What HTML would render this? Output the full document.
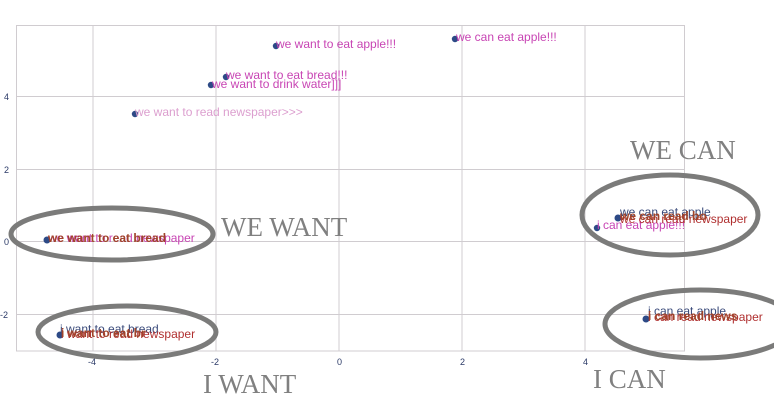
<!DOCTYPE html>
<html><head><meta charset="utf-8"><style>
html,body{margin:0;padding:0;background:#fff;}
svg{display:block;font-family:"Liberation Sans",Arial,sans-serif;}
.tk{font-size:9px;fill:#2b3a67;}
.lb{font-size:12px;}
.big{font-family:"Liberation Serif",serif;font-size:27px;fill:#808080;}
</style></head><body>
<svg width="774" height="400" viewBox="0 0 774 400">
<g stroke="#d0ccd0" stroke-width="1" fill="none">
<rect x="16.5" y="25.5" width="668" height="325.5"/>
<line x1="93" y1="25" x2="93" y2="351"/>
<line x1="216" y1="25" x2="216" y2="351"/>
<line x1="339" y1="25" x2="339" y2="351"/>
<line x1="462" y1="25" x2="462" y2="351"/>
<line x1="585" y1="25" x2="585" y2="351"/>
<line x1="16" y1="96.5" x2="685" y2="96.5"/>
<line x1="16" y1="169.5" x2="685" y2="169.5"/>
<line x1="16" y1="241.5" x2="685" y2="241.5"/>
<line x1="16" y1="314.5" x2="685" y2="314.5"/>
</g>
<g class="tk">
<text x="4" y="100">4</text><text x="4" y="173">2</text><text x="4" y="245">0</text><text x="0" y="318">-2</text>
<text x="88" y="365">-4</text><text x="211" y="365">-2</text><text x="337" y="365">0</text><text x="460" y="365">2</text><text x="583" y="365">4</text>
</g>
<g fill="#2d4a86">
<circle cx="276" cy="46" r="3.2"/><circle cx="455" cy="39" r="3.2"/>
<circle cx="226" cy="77" r="3.2"/><circle cx="211" cy="85" r="3.2"/>
<circle cx="135" cy="114" r="3.2"/>
<circle cx="47" cy="240" r="3.5"/><circle cx="60" cy="335" r="3.5"/>
<circle cx="597" cy="228" r="3.2"/><circle cx="618" cy="218" r="3.5"/>
<circle cx="646" cy="319" r="3.5"/>
</g>
<g class="lb">
<text x="276" y="48" fill="#c845b4">we want to eat apple!!!</text>
<text x="456" y="41" fill="#c845b4">we can eat apple!!!</text>
<text x="226" y="79" fill="#c845b4">we want to eat bread!!!</text>
<text x="212" y="88" fill="#c845b4">we want to drink water]]]</text>
<text x="135" y="116" fill="#dc9fcf">we want to read newspaper&gt;&gt;&gt;</text>
<text x="48" y="242" fill="#c845b4">we want to read newspaper</text>
<text x="48" y="242" fill="#a0442a" font-weight="bold">we want to eat bread</text>
<text x="60" y="333" fill="#3a4a7a">i want to eat bread</text>
<text x="61" y="338" fill="#b03030">i want to read newspaper</text>
<text x="61" y="337" fill="#a0442a" font-weight="bold">i want to eat br</text>
<text x="597" y="229" fill="#c845b4">i can eat apple!!!</text>
<text x="620" y="216" fill="#3a4a7a">we can eat apple</text>
<text x="620" y="223" fill="#b03030">we can read newspaper</text>
<text x="620" y="220" fill="#a0442a" font-weight="bold">we can read bo</text>
<text x="648" y="315" fill="#3a4a7a">i can eat apple</text>
<text x="648" y="321" fill="#b03030">i can read newspaper</text>
<text x="648" y="320" fill="#a0442a" font-weight="bold">i can read news</text>
</g>
<g fill="none" stroke="#7b7b7a" stroke-width="5">
<ellipse cx="112" cy="234" rx="101" ry="26"/>
<ellipse cx="127" cy="332" rx="89" ry="26"/>
<ellipse cx="670" cy="215" rx="88" ry="40"/>
<ellipse cx="700" cy="324" rx="95" ry="34"/>
</g>
<g class="big">
<text x="221" y="236">WE WANT</text>
<text x="630" y="159">WE CAN</text>
<text x="203" y="393">I WANT</text>
<text x="593" y="388">I CAN</text>
</g>
</svg>
</body></html>
